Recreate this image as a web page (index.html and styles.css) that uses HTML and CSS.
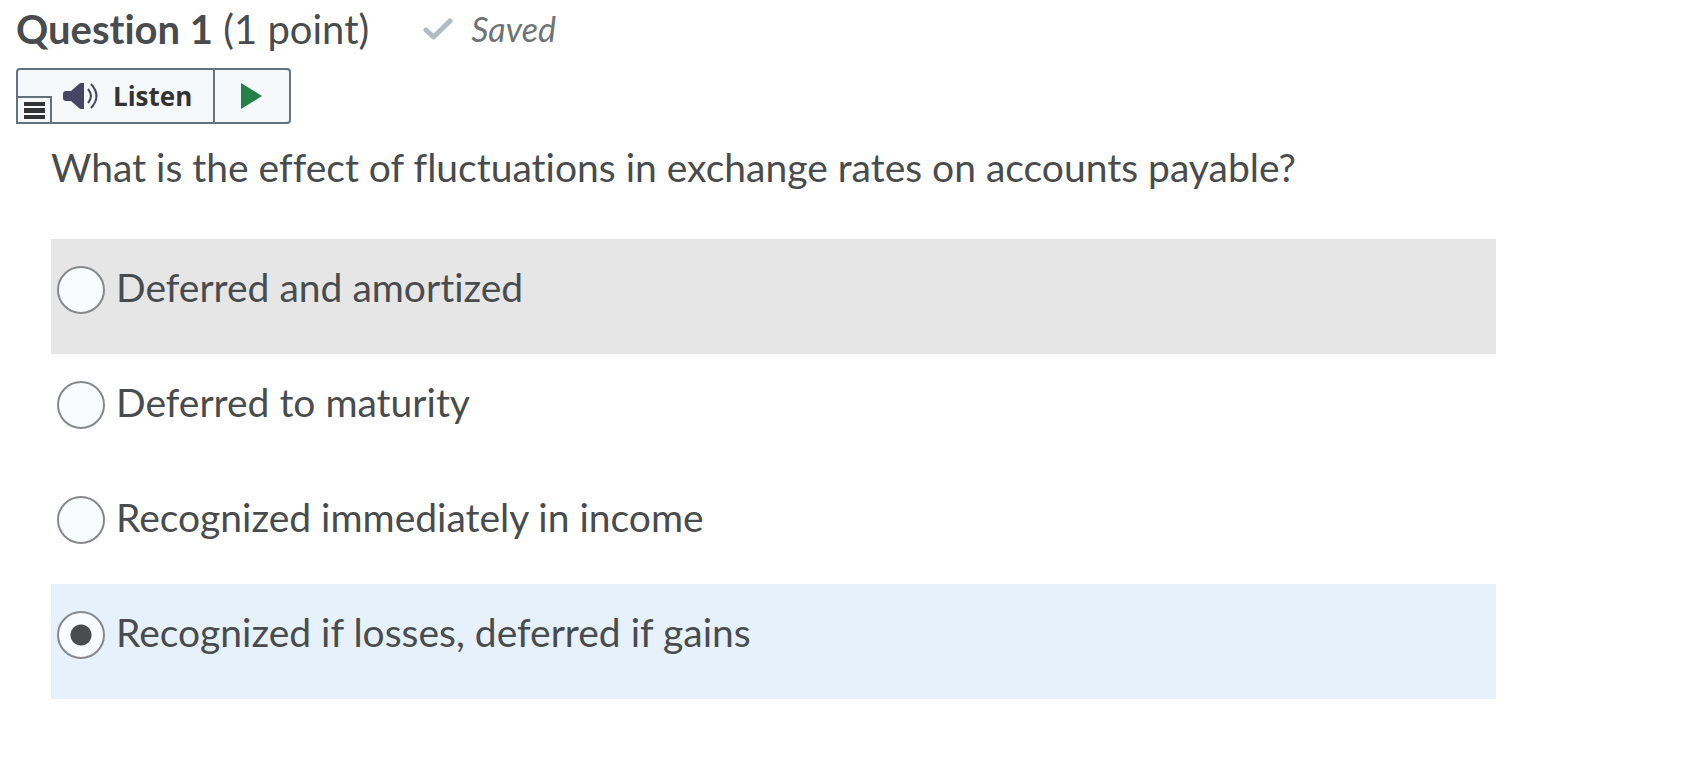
FILE: index.html
```html
<!DOCTYPE html>
<html lang="en">
<head>
  <meta charset="UTF-8">
  <meta name="viewport" content="width=device-width, initial-scale=1.0">
  <title>Question 1</title>
  <link rel="stylesheet" href="styles.css">
</head>
<body>
  <div class="question-header">
    <h2><strong>Question 1</strong> (1 point)</h2>
    <div class="saved">
      <svg width="30" height="24" viewBox="0 0 30 24" aria-hidden="true">
        <path d="M3 13 10.500 20 27 4" fill="none" stroke="#b1bbc1" stroke-width="5" stroke-linecap="round" stroke-linejoin="round"/>
      </svg>
      <em>Saved</em>
    </div>
  </div>

  <div class="reader">
    <button class="reader-menu" type="button" aria-label="Menu">
      <svg width="21" height="17" viewBox="0 0 21 17">
        <path d="M0 0h21v4H0zM0 6h21v5H0zM0 13h21v4H0z" fill="#333"/>
      </svg>
    </button>
    <button class="reader-listen" type="button">
      <svg width="36" height="26" viewBox="0 0 36 26" aria-hidden="true">
        <path d="M3 8h5L16 1q1-1 2-1h3v26h-3q-1 0-2-1l-8-7H3q-3 0-3-3v-4q0-3 3-3z" fill="#484464"/>
        <path d="M25 6q6 7 0 14M28 1q11 12 0 24" fill="none" stroke="#484464" stroke-width="2"/>
      </svg>
      Listen
    </button>
    <button class="reader-play" type="button" aria-label="Play">
      <svg width="21" height="26" viewBox="0 0 21 26">
        <path d="M0 0 21 13 0 26z" fill="#238048"/>
      </svg>
    </button>
  </div>

  <fieldset class="question">
    <legend>What is the effect of fluctuations in exchange rates on accounts payable?</legend>
    <div class="option hover">
      <input type="radio" name="answer" id="a1">
      <label for="a1">Deferred and amortized</label>
    </div>
    <div class="option">
      <input type="radio" name="answer" id="a2">
      <label for="a2">Deferred to maturity</label>
    </div>
    <div class="option">
      <input type="radio" name="answer" id="a3">
      <label for="a3">Recognized immediately in income</label>
    </div>
    <div class="option selected">
      <input type="radio" name="answer" id="a4" checked>
      <label for="a4">Recognized if losses, deferred if gains</label>
    </div>
  </fieldset>
</body>
</html>
```
FILE: styles.css
```css
* {
  box-sizing: border-box;
}
body {
  margin: 0;
  padding: 8px 16px;
  font-family: Lato, sans-serif;
  font-size: 39px;
  font-variant-ligatures: none;
  line-height: 42px;
  color: #494c4e;
  background-color: #fff;
}
.question-header {
  display: flex;
  align-items: center;
  gap: 54px;
}
h2 {
  margin: 0;
  font-size: 40px;
  font-weight: normal;
}
.saved {
  display: flex;
  align-items: center;
  gap: 18px;
  font-size: 34px;
  color: #6e7376;
}
.reader {
  position: relative;
  display: inline-flex;
  height: 56px;
  margin-top: 18px;
  border: 2px solid #66717a;
  border-radius: 4px;
  background-color: #f5f9fc;
}
.reader button {
  display: flex;
  align-items: center;
  padding: 0;
  border: none;
  background: none;
  color: #333;
  cursor: pointer;
}
.reader .reader-listen {
  gap: 14px;
  padding: 0 21px 0 45px;
  font-family: "Open Sans", sans-serif;
  font-size: 26px;
  font-weight: bold;
}
.reader .reader-play {
  padding: 0 27px 0 26px;
  border-left: 2px solid #66717a;
}
/* small menu tab in the corner of the listen button */
.reader .reader-menu {
  position: absolute;
  left: -2px;
  bottom: -2px;
  justify-content: center;
  width: 36px;
  height: 28px;
  border: 2px solid #66717a;
  background-color: #f5f9fc;
}
.question {
  margin: 22px 192px 0 35px;
  padding: 0;
  border: none;
}
legend {
  margin-bottom: 51px;
  padding: 0;
}
.option {
  display: flex;
  align-items: flex-start;
  gap: 11px;
  padding: 27px 6px 40px;
}
.option.hover {
  background-color: #e6e6e6;
}
.option.selected {
  background-color: #e7f1fb;
}
.option input {
  appearance: none;
  flex: none;
  width: 48px;
  height: 48px;
  margin: 0;
  border: 2px solid #86898c;
  border-radius: 50%;
  background-color: #f9fcff;
}
.option input:checked {
  background-image: radial-gradient(circle, #494c4e 10px, transparent 11px);
}
```
